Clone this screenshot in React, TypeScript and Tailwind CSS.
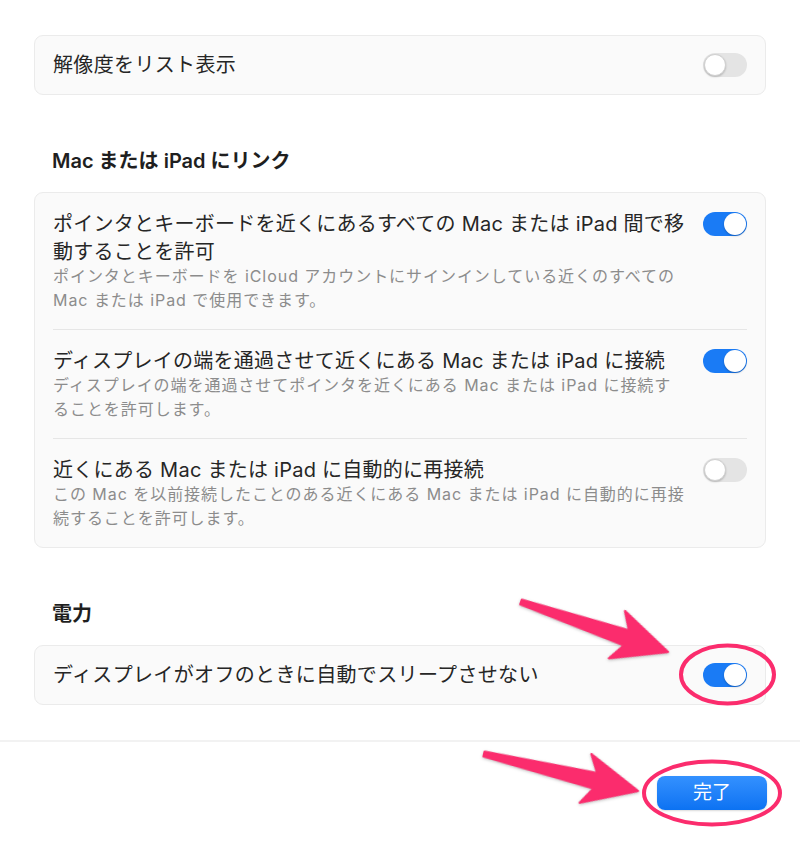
import React from "react";

const font = "font-['Inter','Noto_Sans_CJK_JP',sans-serif]";

function Toggle({ on }: { on: boolean }) {
  return (
    <div
      className={
        on
          ? "relative h-[24px] w-[44px] shrink-0 rounded-full bg-[#1a7bf5]"
          : "relative h-[24px] w-[44px] shrink-0 rounded-full bg-[#e4e4e4]"
      }
    >
      <div
        className={
          on
            ? "absolute top-[1px] right-[1px] h-[22px] w-[22px] rounded-full bg-white shadow-[0_1px_2px_rgba(0,0,0,0.25)]"
            : "absolute top-[1px] left-[1px] h-[22px] w-[22px] rounded-full border border-[#d0d0d0] bg-white shadow-[0_1px_2px_rgba(0,0,0,0.2)]"
        }
      />
    </div>
  );
}

function Card({ children }: { children: React.ReactNode }) {
  return (
    <div className="mx-[34px] rounded-[9px] border border-[#ebebeb] bg-[#fafafa]">
      {children}
    </div>
  );
}

function SimpleRow({ label, on }: { label: string; on: boolean }) {
  return (
    <div className="flex h-[58px] items-center justify-between px-[18px]">
      <span className="text-[20px] leading-[28px] tracking-[0.35px] text-[#262626]">{label}</span>
      <Toggle on={on} />
    </div>
  );
}

interface DetailRowProps {
  title: React.ReactNode;
  desc: React.ReactNode;
  on: boolean;
}

function DetailRow({ title, desc, on }: DetailRowProps) {
  return (
    <div className="flex items-start justify-between gap-4 px-[18px] pt-[17px] pb-[17px]">
      <div className="min-w-0 flex-1 whitespace-nowrap">
        <div className="text-[20px] leading-[28px] tracking-[0.25px] text-[#262626]">{title}</div>
        <div className="mt-[-2px] text-[16px] leading-[24px] tracking-[0.95px] text-[#8c8c8c]">
          {desc}
        </div>
      </div>
      <div className="shrink-0 pt-[2px]">
        <Toggle on={on} />
      </div>
    </div>
  );
}

function Heading({ children }: { children: React.ReactNode }) {
  return (
    <h2 className="px-[52px] text-[20px] leading-[28px] font-semibold text-[#1f1f1f]">
      {children}
    </h2>
  );
}

function Arrow({ x, y, tx, ty }: { x: number; y: number; tx: number; ty: number }) {
  const L = Math.hypot(tx - x, ty - y);
  const angle = (Math.atan2(ty - y, tx - x) * 180) / Math.PI;
  const b = L - 54;
  const points = `0,-2.5 ${b + 10},-8 ${b},-25 ${L},0 ${b},25 ${b + 10},8 0,2.5`;
  return (
    <g transform={`translate(${x} ${y}) rotate(${angle})`}>
      <polygon points={points} fill="#fb2c6d" stroke="#fb2c6d" strokeWidth="2" strokeLinejoin="round" />
    </g>
  );
}

export default function App() {
  return (
    <div className={`relative h-[844px] w-[800px] overflow-hidden bg-white ${font}`}>
      <div className="pt-[35px]">
        <Card>
          <SimpleRow label="解像度をリスト表示" on={false} />
        </Card>

        <div className="mt-[52px]">
          <Heading>Mac または iPad にリンク</Heading>
        </div>
        <div className="mt-[17px]">
          <Card>
            <DetailRow
              on
              title={
                <>
                  ポインタとキーボードを近くにあるすべての Mac または iPad 間で移
                  <br />
                  動することを許可
                </>
              }
              desc={
                <>
                  ポインタとキーボードを iCloud アカウントにサインインしている近くのすべての
                  <br />
                  Mac または iPad で使用できます。
                </>
              }
            />
            <div className="mx-[18px] h-px bg-[#e6e6e6]" />
            <DetailRow
              on
              title="ディスプレイの端を通過させて近くにある Mac または iPad に接続"
              desc={
                <>
                  ディスプレイの端を通過させてポインタを近くにある Mac または iPad に接続す
                  <br />
                  ることを許可します。
                </>
              }
            />
            <div className="mx-[18px] h-px bg-[#e6e6e6]" />
            <DetailRow
              on={false}
              title="近くにある Mac または iPad に自動的に再接続"
              desc={
                <>
                  この Mac を以前接続したことのある近くにある Mac または iPad に自動的に再接
                  <br />
                  続することを許可します。
                </>
              }
            />
          </Card>
        </div>

        <div className="mt-[52px]">
          <Heading>電力</Heading>
        </div>
        <div className="mt-[17px]">
          <Card>
            <SimpleRow label="ディスプレイがオフのときに自動でスリープさせない" on />
          </Card>
        </div>

        <div className="mt-[35px] h-[2px] bg-[#f2f2f2]" />

        <div className="flex justify-end px-[33px] pt-[34px]">
          <button className="h-[34px] w-[110px] rounded-[8px] bg-gradient-to-b from-[#3391ff] to-[#0b72f2] text-[19px] leading-[34px] text-white shadow-[0_1px_2px_rgba(0,0,0,0.15)]">
            完了
          </button>
        </div>
      </div>

      {/* annotations */}
      <svg
        className="pointer-events-none absolute inset-0"
        width="800"
        height="844"
        viewBox="0 0 800 844"
      >
        <g style={{ filter: "drop-shadow(0 1px 1.5px rgba(0,0,0,0.25))" }}>
          <Arrow x={521} y={602} tx={668} ty={652} />
          <Arrow x={484} y={754} tx={638} ty={791} />
        </g>
        <ellipse cx="727.5" cy="674.5" rx="46.5" ry="29" fill="none" stroke="#fb2c6d" strokeWidth="4" />
        <ellipse cx="712" cy="793" rx="68" ry="31.5" fill="none" stroke="#fb2c6d" strokeWidth="4" />
      </svg>
    </div>
  );
}
